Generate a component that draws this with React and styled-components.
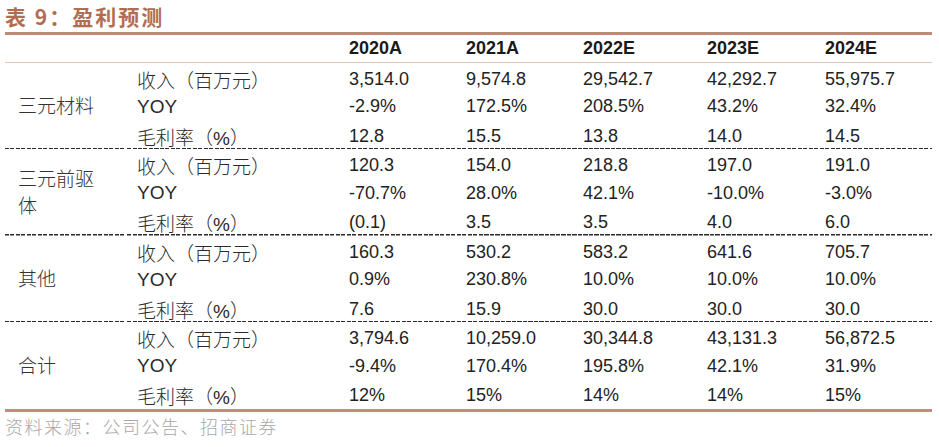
import React from "react";
import styled, { createGlobalStyle } from "styled-components";

const years = ["2020A", "2021A", "2022E", "2023E", "2024E"];

const groups = [
  {
    name: "三元材料",
    rows: [
      ["收入（百万元）", "3,514.0", "9,574.8", "29,542.7", "42,292.7", "55,975.7"],
      ["YOY", "-2.9%", "172.5%", "208.5%", "43.2%", "32.4%"],
      ["毛利率（%）", "12.8", "15.5", "13.8", "14.0", "14.5"],
    ],
  },
  {
    name: "三元前驱体",
    rows: [
      ["收入（百万元）", "120.3", "154.0", "218.8", "197.0", "191.0"],
      ["YOY", "-70.7%", "28.0%", "42.1%", "-10.0%", "-3.0%"],
      ["毛利率（%）", "(0.1)", "3.5", "3.5", "4.0", "6.0"],
    ],
  },
  {
    name: "其他",
    rows: [
      ["收入（百万元）", "160.3", "530.2", "583.2", "641.6", "705.7"],
      ["YOY", "0.9%", "230.8%", "10.0%", "10.0%", "10.0%"],
      ["毛利率（%）", "7.6", "15.9", "30.0", "30.0", "30.0"],
    ],
  },
  {
    name: "合计",
    rows: [
      ["收入（百万元）", "3,794.6", "10,259.0", "30,344.8", "43,131.3", "56,872.5"],
      ["YOY", "-9.4%", "170.4%", "195.8%", "42.1%", "31.9%"],
      ["毛利率（%）", "12%", "15%", "14%", "14%", "15%"],
    ],
  },
];

export default function App() {
  return (
    <Page>
      <GlobalStyle />
      <Title>表 9：盈利预测</Title>
      <HeaderRow>
        <span />
        <span />
        {years.map((y) => (
          <HeadCell key={y}>{y}</HeadCell>
        ))}
      </HeaderRow>
      <Body>
        {groups.map((g, gi) => (
          <Group key={g.name}>
            <GroupLabel $last={gi === groups.length - 1}>
              <span>{g.name}</span>
            </GroupLabel>
            <Rows $last={gi === groups.length - 1}>
              {g.rows.map((r) => (
                <Row key={r[0]}>
                  <Metric>{r[0]}</Metric>
                  {r.slice(1).map((v, i) => (
                    <Cell key={i}>{v}</Cell>
                  ))}
                </Row>
              ))}
            </Rows>
          </Group>
        ))}
      </Body>
      <Source>资料来源：公司公告、招商证券</Source>
    </Page>
  );
}

const GlobalStyle = createGlobalStyle`
  body {
    margin: 0;
    background: #fff;
  }
`;

const dashed = "repeating-linear-gradient(90deg, #2a2a2a 0 4px, transparent 4px 5.5px)";

const Page = styled.div`
  width: 927px;
  padding-left: 5px;
  font-family: "Liberation Sans", "Noto Sans CJK SC", sans-serif;
  color: #222;
`;

const Title = styled.div`
  height: 32px;
  display: flex;
  align-items: center;
  font-family: "Noto Sans CJK SC", sans-serif;
  font-size: 21px;
  font-weight: 700;
  letter-spacing: 2px;
  color: #b26d50;
  border-bottom: 3px solid #bf8a78;
`;

const HeaderRow = styled.div`
  display: grid;
  grid-template-columns: 122px 222px 117px 117px 124px 118px 1fr;
  height: 27px;
  align-items: center;
  border-bottom: 1.5px solid #e3c6b8;
`;

const HeadCell = styled.span`
  font-size: 18px;
  font-weight: 700;
  color: #1a1a1a;
`;

const Body = styled.div`
  border-bottom: 3px solid #c38b79;
`;

const Group = styled.div`
  display: flex;
`;

const GroupLabel = styled.div`
  width: 120px;
  flex: none;
  display: flex;
  align-items: center;
  padding: 0 0 3px 13px;
  box-sizing: border-box;
  font-family: "Noto Sans CJK SC", sans-serif;
  font-weight: 300;
  font-size: 19px;
  line-height: 27px;
  color: #333;
  background: ${(p) => (p.$last ? "none" : dashed)} left bottom / 100% 1.5px no-repeat;

  span {
    max-width: 80px;
  }
`;

const Rows = styled.div`
  flex: 1;
  margin-left: 2px;
  padding-bottom: 1.5px;
  background: ${(p) => (p.$last ? "none" : dashed)} left bottom / 100% 1.5px no-repeat;
`;

const Row = styled.div`
  display: grid;
  grid-template-columns: 222px 117px 117px 124px 118px 1fr;
  height: 28.33px;
  padding-top: 3px;
  box-sizing: border-box;
  align-items: center;
`;

const Metric = styled.span`
  padding-left: 10px;
  font-size: 19px;
  font-weight: 300;
  color: #2a2a2a;
`;

const Cell = styled.span`
  font-size: 18px;
  color: #222;
`;

const Source = styled.div`
  height: 28px;
  display: flex;
  align-items: center;
  font-family: "Noto Sans CJK SC", sans-serif;
  font-size: 18px;
  font-weight: 300;
  color: #a8a8a8;
  letter-spacing: 1.5px;
`;
